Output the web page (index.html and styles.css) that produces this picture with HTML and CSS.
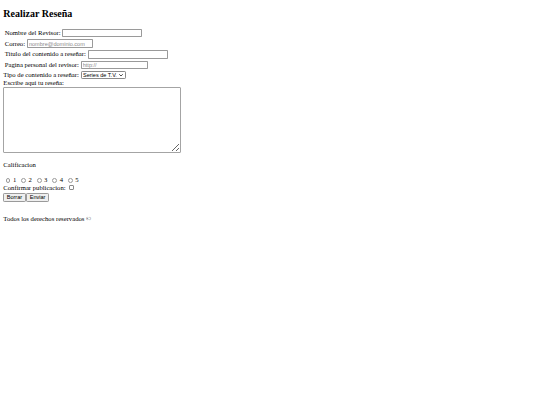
FILE: index.html
```html
<!DOCTYPE html>
<html lang="es">
<head>
<meta charset="utf-8">
<title>Realizar Reseña</title>
<link rel="stylesheet" href="styles.css">
</head>
<body>
<main class="page">
  <h2 class="title">Realizar Reseña</h2>
  <form class="form">
    <div class="fields">
      <div class="row"><label for="nombre">Nombre del Revisor:</label><input id="nombre" class="text w-80" type="text"></div>
      <div class="row"><label for="correo">Correo:</label><input id="correo" class="text w-66" type="email" placeholder="nombre@dominio.com"></div>
      <div class="row"><label for="titulo">Titulo del contenido a reseñar:</label><input id="titulo" class="text w-80" type="text"></div>
      <div class="row"><label for="pagina">Pagina personal del revisor:</label><input id="pagina" class="text w-67" type="url" placeholder="http://"></div>
    </div>
    <div class="line">
      <label for="tipo">Tipo de contenido a reseñar:</label>
      <span class="select-wrap">
        <select id="tipo" class="select">
          <option>Series de T.V.</option>
          <option>Películas</option>
          <option>Libros</option>
        </select>
        <svg class="chev" viewBox="0 0 8 5" width="4" height="2.5" aria-hidden="true"><path d="M1 1 L4 4 L7 1" fill="none" stroke="#222" stroke-width="1.6" stroke-linecap="round" stroke-linejoin="round"/></svg>
      </span>
    </div>
    <div class="line"><label for="resena">Escribe aqui tu reseña:</label></div>
    <textarea id="resena" class="area"></textarea>
    <p class="section">Calificacion</p>
    <div class="radios">
      <label class="opt"><input class="radio" type="radio" name="cal" value="1">1</label>
      <label class="opt"><input class="radio" type="radio" name="cal" value="2">2</label>
      <label class="opt"><input class="radio" type="radio" name="cal" value="3">3</label>
      <label class="opt"><input class="radio" type="radio" name="cal" value="4">4</label>
      <label class="opt"><input class="radio" type="radio" name="cal" value="5">5</label>
    </div>
    <div class="line"><label for="confirmar">Confirmar publicacion:</label><input id="confirmar" class="check" type="checkbox"></div>
    <div class="buttons">
      <button class="btn" type="reset">Borrar</button>
      <button class="btn" type="submit">Enviar</button>
    </div>
  </form>
  <p class="footer">Todos los derechos reservados <span class="copy">&#169;&#xFE0E;</span></p>
</main>
</body>
</html>
```

FILE: styles.css
```css
html, body {
  margin: 0;
  background: #ffffff;
}

body {
  font-family: "Liberation Serif", "Times New Roman", serif;
  font-size: 6.67px;
  color: #000000;
}

.page {
  padding: 0 3.33px;
}

.title {
  font-size: 10px;
  font-weight: bold;
  line-height: 11.5px;
  margin: 7.6px 0 8.3px;
}

.form {
  margin: 0;
}

.fields {
  display: flex;
  flex-direction: column;
  gap: 2px;
  padding: 1.2px 0 1.2px 1.4px;
}

.row,
.line {
  display: flex;
  align-items: baseline;
  gap: 1.7px;
}

.text,
.select,
.btn {
  font-family: "Liberation Sans", Arial, sans-serif;
  font-size: 5.56px;
}

.text {
  box-sizing: border-box;
  height: 8.7px;
  margin: 0;
  padding: 0 1.2px;
  border: 1px solid #9a9a9a;
  border-radius: 0.8px;
  background: #ffffff;
  color: #000000;
}

.text::placeholder {
  color: #8a8a8a;
}

.w-80 { width: 80px; }
.w-66 { width: 66px; }
.w-67 { width: 67px; }

.select-wrap {
  position: relative;
  display: inline-flex;
}

.select {
  appearance: none;
  -webkit-appearance: none;
  box-sizing: border-box;
  height: 8px;
  width: 45px;
  margin: 0;
  padding: 0 0 0 1.4px;
  border: 1px solid #8a8a8a;
  border-radius: 1.2px;
  background: #ffffff;
  color: #000000;
  line-height: 6px;
}

.chev {
  position: absolute;
  right: 2.2px;
  top: 3px;
  pointer-events: none;
}

.area {
  display: block;
  box-sizing: border-box;
  width: 178px;
  height: 66.4px;
  margin: 1.4px 0 0;
  padding: 1px;
  border: 1px solid #a4a4a4;
  border-radius: 1px;
  background: #ffffff;
}

.section {
  margin: 7.5px 0 8.7px;
}

.radios {
  display: flex;
  align-items: flex-end;
  gap: 2.7px;
  height: 7.7px;
}

.opt {
  display: flex;
  align-items: flex-end;
  gap: 2.6px;
  line-height: 7.7px;
}

.radio {
  appearance: none;
  -webkit-appearance: none;
  box-sizing: border-box;
  width: 4.8px;
  height: 4.8px;
  margin: 0 0 1.6px 2.2px;
  border: 1px solid #9a9a9a;
  border-radius: 50%;
  background: #ffffff;
}

.check {
  appearance: none;
  -webkit-appearance: none;
  box-sizing: border-box;
  width: 5.2px;
  height: 5.2px;
  margin: 0 0 0 1.4px;
  border: 1px solid #8a8a8a;
  border-radius: 1px;
  background: #ffffff;
}

.buttons {
  display: flex;
  gap: 0.8px;
  margin-top: 1.6px;
}

.btn {
  box-sizing: border-box;
  height: 9.2px;
  padding: 0 2.4px;
  margin: 0;
  border: 1px solid #9a9a9a;
  border-radius: 1.2px;
  background: #efefef;
  color: #000000;
}

.footer {
  margin: 13.5px 0 0;
}

.copy {
  font-family: "Liberation Serif", "DejaVu Serif", serif;
  font-variant-emoji: text;
  color: #000000;
}
```
